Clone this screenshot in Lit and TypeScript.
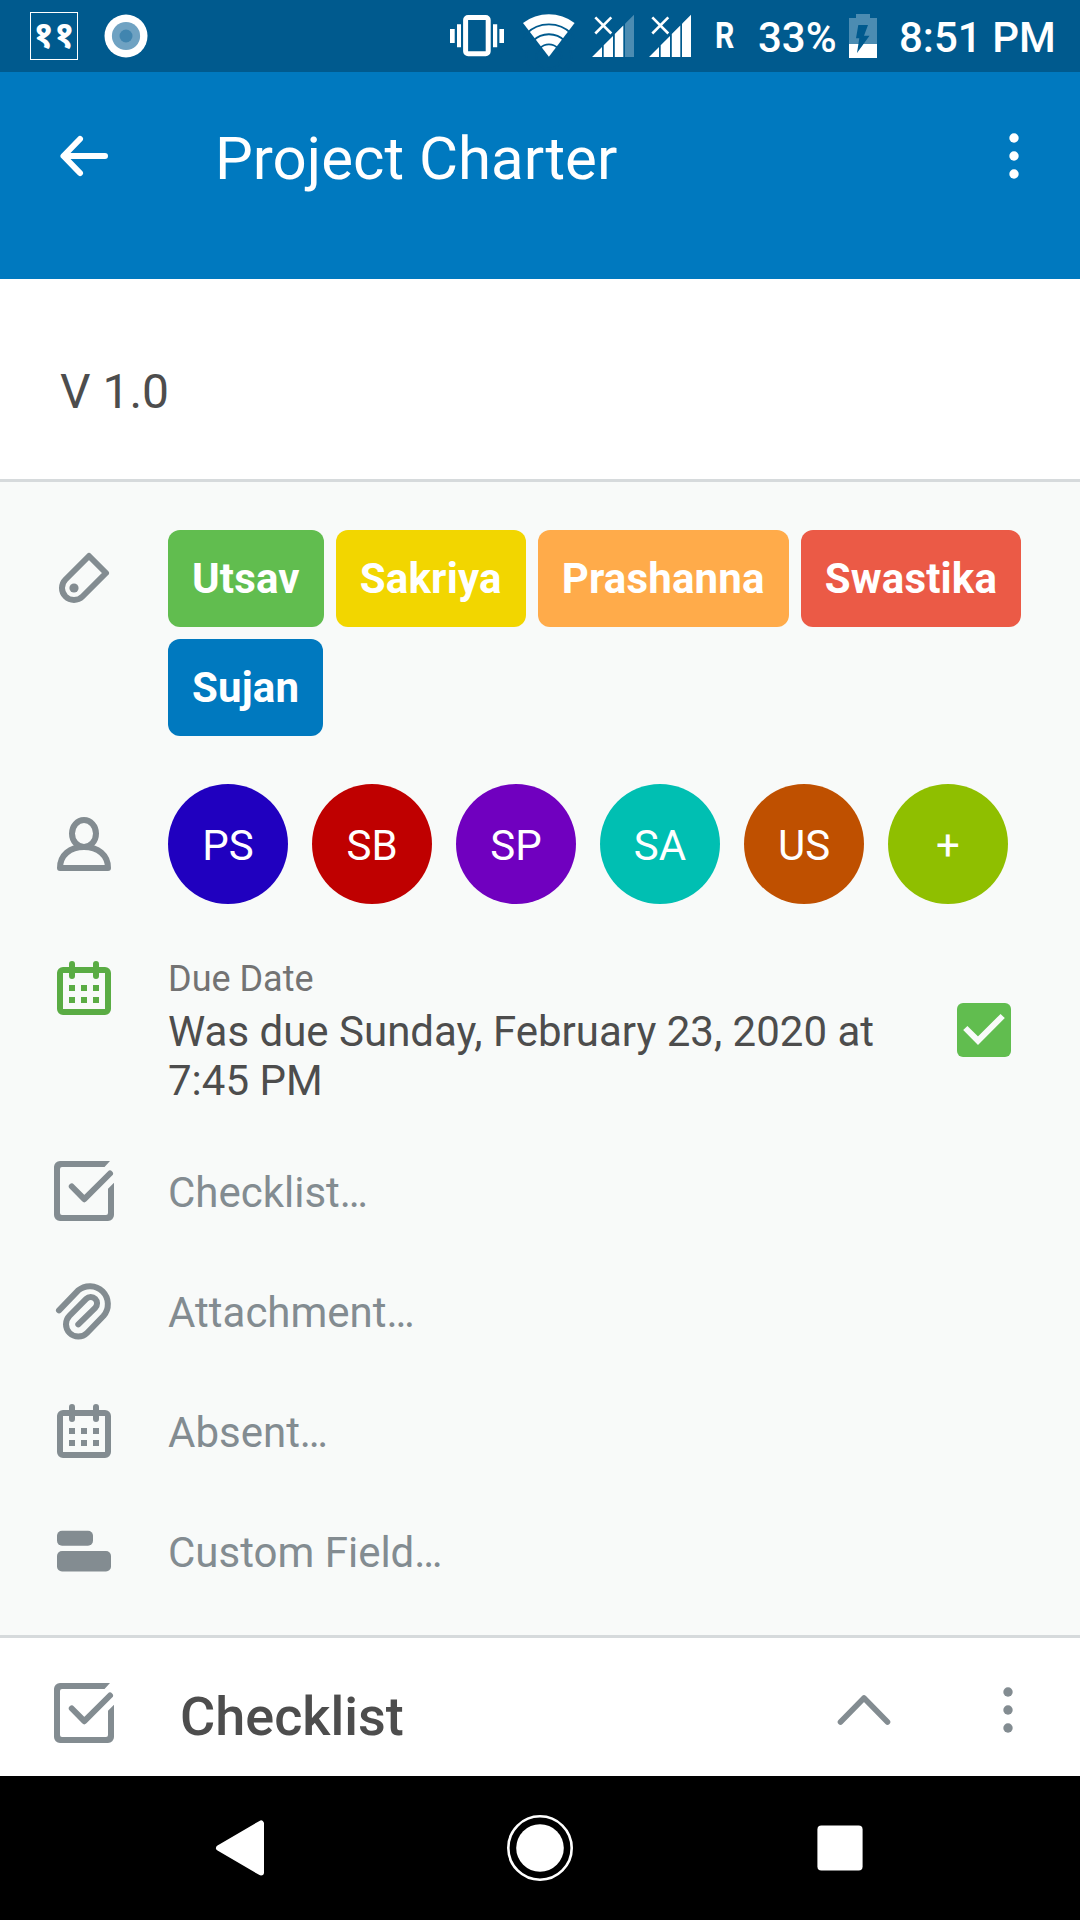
import { LitElement, html, css, svg, TemplateResult, SVGTemplateResult } from "lit";
import { customElement } from "lit/decorators.js";
import { styleMap } from "lit/directives/style-map.js";

const icon = (w: number, h: number, body: SVGTemplateResult) =>
  html`<svg width=${w} height=${h} viewBox="0 0 ${w} ${h}" fill="none">${body}</svg>`;

const calendar = icon(72, 72, svg`
  <rect x="12" y="18" width="48" height="42" rx="3" stroke="currentColor" stroke-width="6"/>
  <path d="M24 12v12M48 12v12" stroke="currentColor" stroke-width="6" stroke-linecap="round"/>
  <path d="M21 33h6v6h-6zM33 33h6v6h-6zM45 33h6v6h-6zM21 45h6v6h-6zM33 45h6v6h-6zM45 45h6v6h-6z" fill="currentColor"/>`);

const checklist = icon(72, 72, svg`
  <path fill="currentColor" d="M12 6H62L56.5 12H14a2 2 0 0 0-2 2V58a2 2 0 0 0 2 2H58a2 2 0 0 0 2-2V33.7L66 27.7V60a6 6 0 0 1-6 6H12a6 6 0 0 1-6-6V12a6 6 0 0 1 6-6z"/>
  <path d="M23.8 31.5 36.3 44.2 62 18.5" stroke="currentColor" stroke-width="6" stroke-linecap="round" stroke-linejoin="round"/>`);

const paperclip = icon(72, 72, svg`
  <path d="M11 35.3 30 15.6A18 18 0 0 1 55.4 41L39 58A12.3 12.3 0 0 1 21.6 40.6L38.2 23.8A6.3 6.3 0 0 1 47.2 32.8L30.3 49.3" stroke="currentColor" stroke-width="6" stroke-linecap="round" stroke-linejoin="round"/>`);

const customField = icon(72, 72, svg`
  <rect x="9" y="15.8" width="36" height="15" rx="5" fill="currentColor"/>
  <rect x="9" y="36.1" width="54" height="20.4" rx="5" fill="currentColor"/>`);

const tag = icon(72, 72, svg`
  <path d="M17.5 37.5 41 14 58 31 34.5 54.5A12 12 0 0 1 17.5 37.5z" stroke="currentColor" stroke-width="6" stroke-linejoin="round"/>
  <circle cx="26" cy="46" r="4.6" fill="currentColor"/>`);

const person = icon(72, 72, svg`
  <ellipse cx="36" cy="25.5" rx="12" ry="13.5" stroke="currentColor" stroke-width="6"/>
  <path d="M12 60H60C60 47 50 39 36 39S12 47 12 60z" stroke="currentColor" stroke-width="6" stroke-linejoin="round"/>`);

const dots = icon(12, 48, svg`
  <circle cx="6" cy="6" r="4.7" fill="currentColor"/>
  <circle cx="6" cy="24" r="4.7" fill="currentColor"/>
  <circle cx="6" cy="42" r="4.7" fill="currentColor"/>`);

const back = icon(60, 48, svg`
  <path d="M51 24H10M26 7 9.5 24 26 41" stroke="#fff" stroke-width="6" stroke-linecap="round" stroke-linejoin="round"/>`);

const chevron = icon(60, 36, svg`
  <path d="M6.5 30 30 6 53.5 30" stroke="currentColor" stroke-width="5.6" stroke-linecap="round" stroke-linejoin="round"/>`);

const vibrate = icon(54, 72, svg`
  <rect x="15.6" y="17.5" width="22.6" height="36.2" rx="2.5" stroke="#fff" stroke-width="5"/>
  <path fill="#fff" d="M0 29h4.7v14H0zM7 24.3h4v22.9H7zM43 24.3h4.2v22.9H43zM49.4 29H54v14h-4.6z"/>`);

const wifi = icon(52, 72, svg`
  <path fill="#fff" d="M25.9 56.7 0 22.9A43 43 0 0 1 51.6 22.9z"/>
  <g stroke="#005a8e" stroke-width="1.9">
    <circle cx="25.9" cy="56.7" r="32.3"/><circle cx="25.9" cy="56.7" r="22.4"/><circle cx="25.9" cy="56.7" r="12.3"/>
  </g>`);

const signal = (full: boolean) => icon(42, 72, svg`
  <path fill="#fff" d="M0 57 10 47V57zM11.7 57V45.2L21 36V57zM22.8 57V34L31.3 25.6V57z"/>
  <path d="M33 57V23.8L42 14.8V57z" fill=${full ? "#fff" : "#4c8cb2"}/>
  <path d="M3.3 17.3 19.3 33.5M19.3 17.3 3.3 33.5" stroke="#fff" stroke-width="2.6"/>`);

const battery = icon(28, 72, svg`
  <path fill="#4c8cb2" d="M7 14h14v4h7v26H0V18h7z"/>
  <path fill="#fff" d="M0 44h28v14H0z"/>
  <path fill="#005a8e" d="M9.3 25H19L15 35.7H20.5L8 53 10.3 38.3H7z"/>`);

const notice = icon(44, 44, svg`
  <circle cx="22" cy="22" r="21.5" fill="#fff"/><circle cx="22" cy="22" r="14.1" fill="#6fa2c2"/><circle cx="22" cy="22" r="6.5" fill="#4185af"/>`);

const doneCheck = icon(54, 54, svg`
  <rect width="54" height="54" rx="6" fill="#61bd4f"/>
  <path d="M8.3 25 21 37.7 45.7 13" stroke="#f8faf9" stroke-width="6"/>`);

const navBack = icon(60, 60, svg`
  <path d="M9 30 51 5.5V54.5z" fill="#fff" stroke="#fff" stroke-width="6" stroke-linejoin="round"/>`);
const navHome = icon(68, 68, svg`
  <circle cx="34" cy="34" r="31.7" stroke="#fff" stroke-width="2.6"/><circle cx="34" cy="34" r="23.8" fill="#fff"/>`);
const navRecent = icon(46, 46, svg`<rect x=".4" y=".4" width="45.2" height="45.2" rx="4" fill="#fff"/>`);

const labels = [
  { name: "Utsav", color: "#61bd4f" },
  { name: "Sakriya", color: "#f2d600" },
  { name: "Prashanna", color: "#ffab4a" },
  { name: "Swastika", color: "#eb5a46" },
  { name: "Sujan", color: "#0079bf" },
];

const members = [
  { name: "PS", color: "#2000bf" },
  { name: "SB", color: "#bf0000" },
  { name: "SP", color: "#7000bf" },
  { name: "SA", color: "#00bfb2" },
  { name: "US", color: "#bf5000" },
  { name: "+", color: "#8fbf00" },
];

const fields: { icon: TemplateResult; text: string }[] = [
  { icon: checklist, text: "Checklist…" },
  { icon: paperclip, text: "Attachment…" },
  { icon: calendar, text: "Absent…" },
  { icon: customField, text: "Custom Field…" },
];

@customElement("app-root")
export class AppRoot extends LitElement {
  static styles = css`
    :host {
      display: flex;
      flex-direction: column;
      width: 1080px;
      height: 1920px;
      overflow: hidden;
      background: #fff;
      color: #4d4d4d;
      font-family: Roboto, "Noto Sans", sans-serif;
      font-size: 42px;
      line-height: 49px;
    }
    * { box-sizing: border-box; }
    svg { display: block; flex: none; }
    .status {
      display: flex;
      align-items: center;
      height: 72px;
      flex: none;
      padding: 0 25px 0 30px;
      background: #005a8e;
      color: #fff;
      font-weight: 500;
      white-space: nowrap;
    }
    .date {
      width: 48px;
      height: 48px;
      border: 1.5px solid #fff;
      display: flex;
      align-items: center;
      justify-content: center;
      font: 700 37px/44px "Noto Sans Devanagari", "Noto Sans", sans-serif;
      padding-top: 3px;
      margin-right: 26px;
    }
    .grow { flex: 1; }
    .tray { display: flex; align-items: center; height: 72px; }
    .wifi { margin-left: 19px; }
    .sig1 { margin-left: 17px; }
    .sig2 { margin-left: 15px; }
    .roam {
      font-size: 36px;
      font-weight: 700;
      width: 19px;
      margin-left: 24px;
      transform: scaleX(.84);
      transform-origin: left;
    }
    .pct { width: 77px; margin: 2px 0 0 24px; }
    .batt { margin-left: 14px; }
    .clock { margin: 2px 0 0 22px; width: 156px; }
    .bar {
      display: flex;
      align-items: center;
      height: 207px;
      flex: none;
      padding: 0 60px 39px 54px;
      background: #0079bf;
      color: #fff;
    }
    .title {
      flex: 1;
      margin: 5px 0 0 101px;
      font-size: 60px;
      line-height: 70px;
      font-weight: 400;
    }
    .desc {
      height: 200px;
      flex: none;
      padding: 85px 60px 0;
      font-size: 48px;
      line-height: 56px;
    }
    .details {
      height: 1159px;
      flex: none;
      padding: 48px 48px 0;
      background: #f8faf9;
      border-top: 3px solid #d6dadc;
      border-bottom: 3px solid #d6dadc;
    }
    .row { display: flex; color: #838c91; }
    .body { flex: 1; margin-left: 48px; }
    .labels-row { padding-bottom: 48px; }
    .labels-row svg { margin-top: 12px; }
    .labels { display: flex; flex-wrap: wrap; gap: 12px; margin-right: -12px; }
    .label {
      height: 97px;
      padding: 24px;
      border-radius: 12px;
      color: #fff;
      font-weight: 700;
      letter-spacing: .18px;
    }
    .members-row { align-items: center; }
    .members { display: flex; gap: 24px; }
    .avatar {
      width: 120px;
      height: 120px;
      border-radius: 50%;
      color: #fff;
      display: flex;
      align-items: center;
      justify-content: center;
      padding-top: 2px;
    }
    .due-row { padding-top: 48px; height: 227px; color: #5aac44; }
    .due { padding-top: 6px; color: #4d4d4d; }
    .due-label { font-size: 36px; line-height: 42px; color: #737373; margin-bottom: 7px; }
    .due-check { padding: 51px 21px 0 0; }
    .due-text { width: 740px; }
    .field { align-items: center; height: 120px; }
    .field .body { padding-top: 3px; }
    .section {
      flex: 1;
      display: flex;
      align-items: center;
      padding: 0 66px 0 48px;
      color: #838c91;
    }
    .section > svg { margin-top: 12px; }
    .section h2 {
      flex: 1;
      margin: 19px 0 0 60px;
      color: #4d4d4d;
      font-size: 54px;
      line-height: 63px;
      font-weight: 500;
    }
    .toggle { margin: 6px 108px 0 0; }
    .more { margin-top: 6px; }
    .nav {
      height: 144px;
      flex: none;
      display: flex;
      align-items: center;
      padding-left: 210px;
      background: #000;
    }
    .home { margin: 0 243px 0 236px; }
  `;

  render() {
    return html`
      <header class="status">
        <span class="date">११</span>${notice}
        <span class="grow"></span>
        <div class="tray">
          ${vibrate}
          <span class="wifi">${wifi}</span>
          <span class="sig1">${signal(false)}</span>
          <span class="sig2">${signal(true)}</span>
          <span class="roam">R</span>
          <span class="pct">33%</span>
          <span class="batt">${battery}</span>
          <span class="clock">8:51 PM</span>
        </div>
      </header>
      <div class="bar">${back}<h1 class="title">Project Charter</h1>${dots}</div>
      <div class="desc">V 1.0</div>
      <main class="details">
        <div class="row labels-row">
          ${tag}
          <div class="body labels">
            ${labels.map((l) => html`<span class="label" style=${styleMap({ background: l.color })}>${l.name}</span>`)}
          </div>
        </div>
        <div class="row members-row">
          ${person}
          <div class="body members">
            ${members.map((m) => html`<span class="avatar" style=${styleMap({ background: m.color })}>${m.name}</span>`)}
          </div>
        </div>
        <div class="row due-row">
          ${calendar}
          <div class="body due">
            <div class="due-label">Due Date</div>
            <div class="due-text">Was due Sunday, February 23, 2020 at 7:45 PM</div>
          </div>
          <div class="due-check">${doneCheck}</div>
        </div>
        ${fields.map((f) => html`<div class="row field">${f.icon}<div class="body">${f.text}</div></div>`)}
      </main>
      <section class="section">
        ${checklist}
        <h2>Checklist</h2>
        <span class="toggle">${chevron}</span>
        <span class="more">${dots}</span>
      </section>
      <nav class="nav">${navBack}<span class="home">${navHome}</span>${navRecent}</nav>
    `;
  }
}
